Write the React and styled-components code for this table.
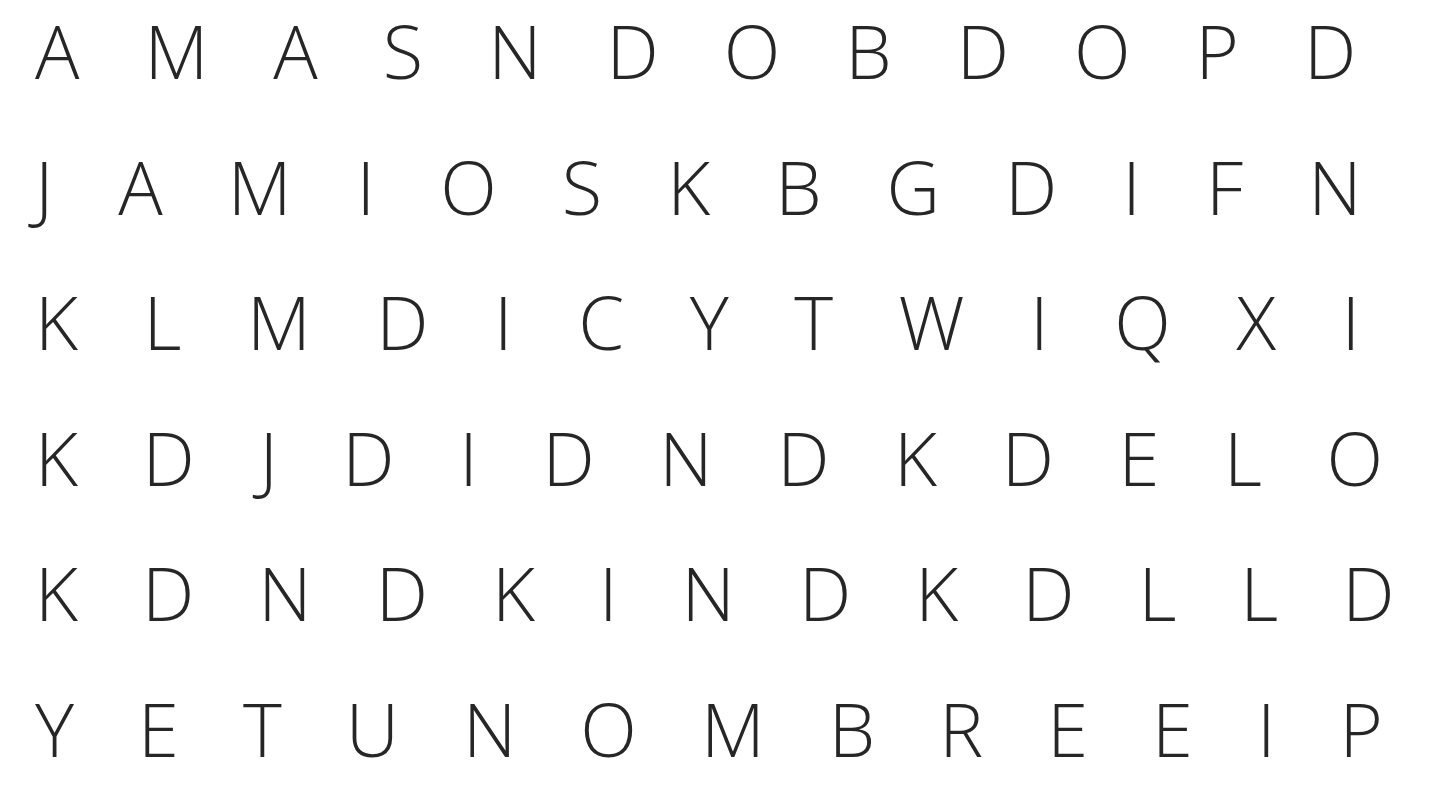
import React from 'react';
import styled, { createGlobalStyle } from 'styled-components';

const GlobalStyle = createGlobalStyle`
  html, body {
    margin: 0;
    padding: 0;
    background: #ffffff;
  }
`;

const Board = styled('div')`
  width: 1440px;
  height: 810px;
  overflow: hidden;
  display: flex;
  flex-direction: column;
  gap: 33.5px;
  padding-left: 35px;
  box-sizing: border-box;
  font-family: 'Open Sans', 'Noto Sans', sans-serif;
  font-size: 74px;
  font-weight: 300;
  line-height: 102px;
  color: #262626;
`;

const Row = styled('div')`
  display: flex;
  gap: ${(props) => props.gap || 65}px;
  white-space: nowrap;
`;

const Letter = styled('span')`
  display: inline-block;
`;

const rows = [
  { letters: 'AMASNDOBDOPD', gap: 65 },
  { letters: 'JAMIOSKBGDIFN', gap: 65 },
  { letters: 'KLMDICYTWIQXI', gap: 65.5 },
  { letters: 'KDJDIDNDKDELO', gap: 64.6 },
  { letters: 'KDNDKINDKDLLD', gap: 64 },
  { letters: 'YETUNOMBREEIP', gap: 64 },
];

const App = () => {
  return (
    <>
      <GlobalStyle />
      <Board>
        {rows.map((row, i) => (
          <Row key={i} gap={row.gap}>
            {row.letters.split('').map((ch, j) => (
              <Letter key={j}>{ch}</Letter>
            ))}
          </Row>
        ))}
      </Board>
    </>
  );
};

export default App;
